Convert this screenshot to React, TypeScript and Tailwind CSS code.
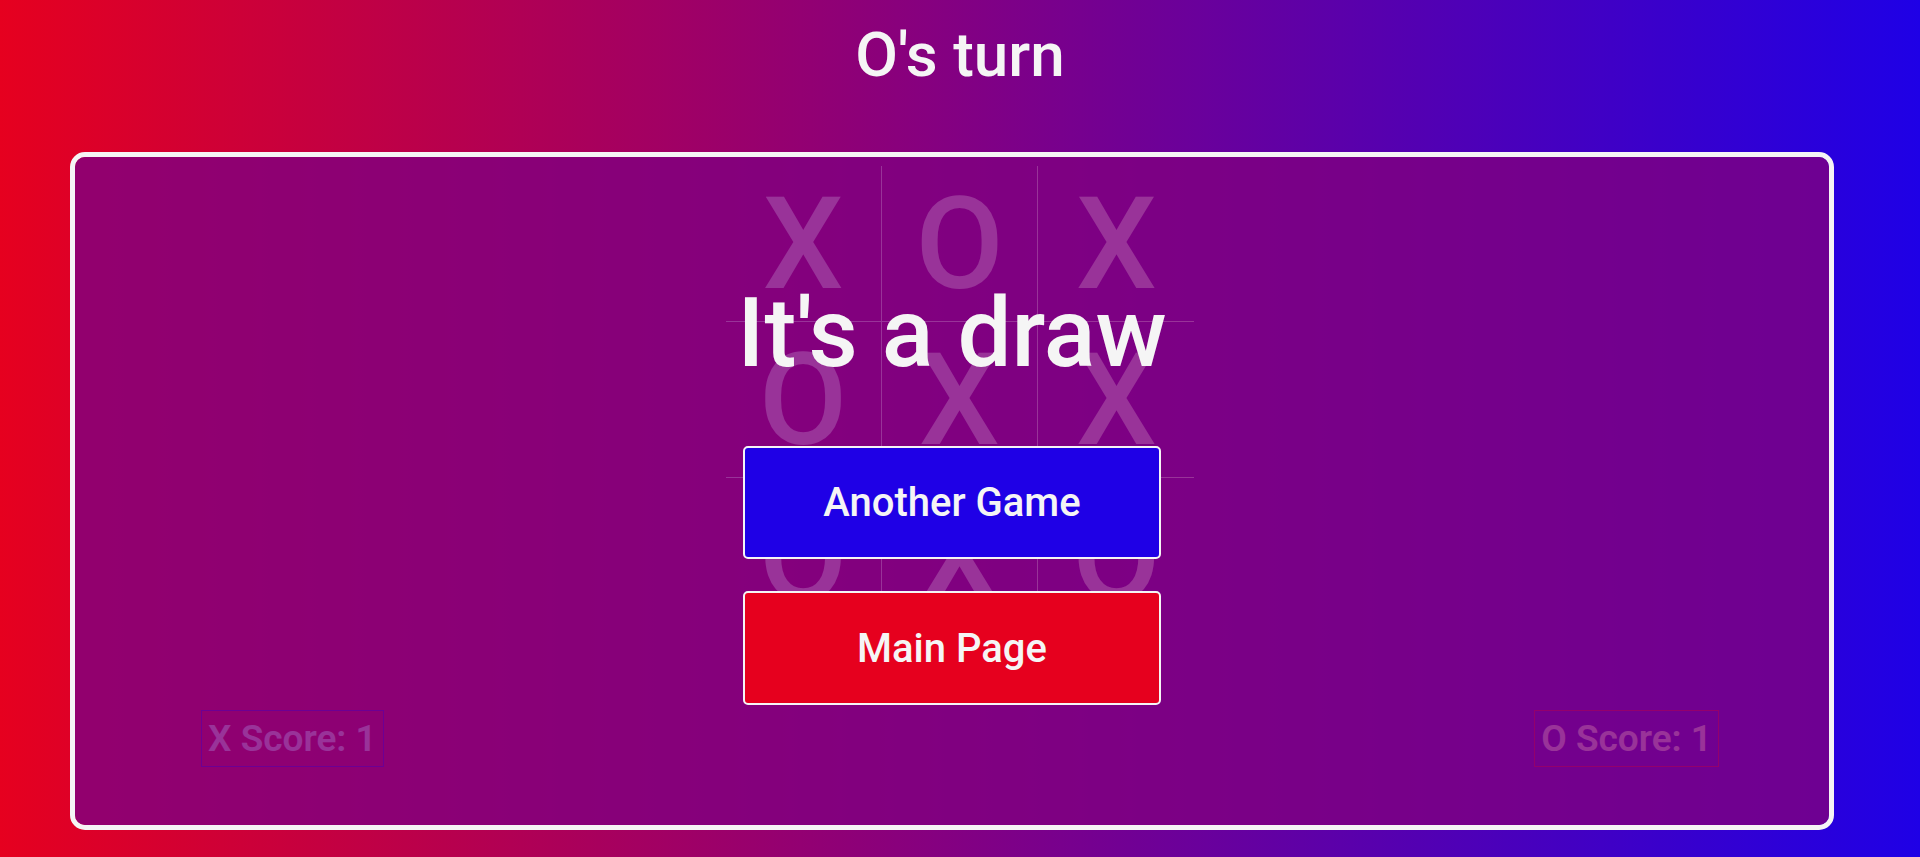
const board = ['X', 'O', 'X', 'O', 'X', 'X', 'O', 'X', 'O']

function Cell({ mark, index }: { mark: string; index: number }) {
  const col = index % 3
  const row = Math.floor(index / 3)
  return (
    <div
      className={
        'flex h-[156px] items-center justify-center text-[128px] font-medium leading-[normal] text-white ' +
        (col < 2 ? 'border-r border-white ' : '') +
        (row < 2 ? 'border-b border-white' : '')
      }
    >
      {mark}
    </div>
  )
}

export default function App() {
  return (
    <div className="h-[857px] w-full overflow-hidden bg-linear-to-r/srgb from-[#e6001f] to-[#1f00e6] pt-[18px] font-['Roboto',sans-serif] text-[#f5f5f5]">
      <h1 className="text-center text-[62px] font-medium leading-[normal]">O's turn</h1>

      <div className="relative mt-[61px] ml-[70px] w-[1764px] rounded-[15px] border-[5px] border-[#f5f5f5]">
        <div className="pt-[9px] pb-[58px] pl-[16px]">
          <div className="mx-auto grid w-[469px] grid-cols-3">
            {board.map((m, i) => (
              <Cell key={i} mark={m} index={i} />
            ))}
          </div>

          <div className="mt-[76px] flex justify-between px-[110px]">
            <div className="flex h-[57px] items-center border border-[#1f00e6] px-[6px] text-[37px] font-semibold leading-[normal] text-white">
              X Score: 1
            </div>
            <div className="flex h-[57px] items-center border border-[#e6001e] px-[6px] text-[37px] font-semibold leading-[normal] text-white">
              O Score: 1
            </div>
          </div>
        </div>

        {/* end-of-game overlay */}
        <div className="absolute inset-0 flex flex-col items-center justify-center rounded-[10px] bg-[#800080]/80">
          <h2 className="text-[96px] font-medium leading-[normal]">It's a draw</h2>
          <button className="mt-[57px] h-[113px] w-[418px] rounded-[5px] border-2 border-[#f5f5f5] bg-[#1f00e6] text-[40px] font-medium leading-[normal]">
            Another Game
          </button>
          <button className="mt-[32px] h-[114px] w-[418px] rounded-[5px] border-2 border-[#f5f5f5] bg-[#e6001e] text-[40px] font-medium leading-[normal]">
            Main Page
          </button>
        </div>
      </div>
    </div>
  )
}
